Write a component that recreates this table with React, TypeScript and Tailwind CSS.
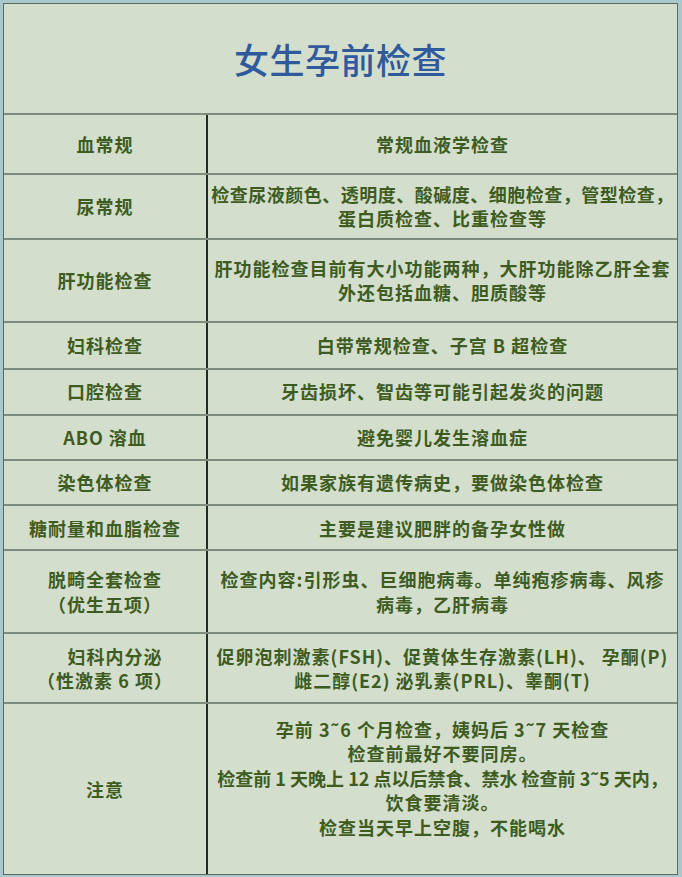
import React from "react";

type Row = {
  h: string;
  left: React.ReactNode;
  right: React.ReactNode;
};

const rows: Row[] = [
  { h: "h-[60px]", left: "血常规", right: "常规血液学检查" },
  {
    h: "h-[65px]",
    left: "尿常规",
    right: (
      <>
        <div className="tracking-[0.5px]">检查尿液颜色、透明度、酸碱度、细胞检查，管型检查，</div>
        <div>蛋白质检查、比重检查等</div>
      </>
    ),
  },
  {
    h: "h-[83px]",
    left: "肝功能检查",
    right: (
      <>
        <div>肝功能检查目前有大小功能两种，大肝功能除乙肝全套</div>
        <div>外还包括血糖、胆质酸等</div>
      </>
    ),
  },
  { h: "h-[47px]", left: "妇科检查", right: "白带常规检查、子宫 B 超检查" },
  { h: "h-[46px]", left: "口腔检查", right: "牙齿损坏、智齿等可能引起发炎的问题" },
  { h: "h-[45px]", left: "ABO 溶血", right: "避免婴儿发生溶血症" },
  { h: "h-[46px]", left: "染色体检查", right: "如果家族有遗传病史，要做染色体检查" },
  { h: "h-[45px]", left: "糖耐量和血脂检查", right: "主要是建议肥胖的备孕女性做" },
  {
    h: "h-[83px]",
    left: (
      <>
        <div>脱畸全套检查</div>
        <div>（优生五项）</div>
      </>
    ),
    right: (
      <>
        <div>检查内容:引形虫、巨细胞病毒。单纯疱疹病毒、风疹</div>
        <div>病毒，乙肝病毒</div>
      </>
    ),
  },
  {
    h: "h-[70px]",
    left: (
      <>
        <div className="pl-[20px]">妇科内分泌</div>
        <div>（性激素 6 项）</div>
      </>
    ),
    right: (
      <>
        <div>促卵泡刺激素(FSH)、促黄体生存激素(LH)、 孕酮(P)</div>
        <div>雌二醇(E2) 泌乳素(PRL)、睾酮(T)</div>
      </>
    ),
  },
  {
    h: "h-[172px]",
    left: "注意",
    right: (
      <div className="pb-[22px]">
        <div>孕前 3˜6 个月检查，姨妈后 3˜7 天检查</div>
        <div>检查前最好不要同房。</div>
        <div className="tracking-[0px]">检查前 1 天晚上 12 点以后禁食、禁水 检查前 3˜5 天内，</div>
        <div>饮食要清淡。</div>
        <div>检查当天早上空腹，不能喝水</div>
      </div>
    ),
  },
];

export default function App() {
  return (
    <div
      className="w-[682px] h-[877px] bg-[#a9c8cc] pt-[3px] pl-[3px]"
      style={{ fontFamily: '"Noto Sans CJK SC", "Noto Sans", sans-serif' }}
    >
      <div className="w-[675px] h-[872px] bg-[#d3dfcc] border border-[#5c6a64] flex flex-col">
        <div className="h-[109px] flex items-center justify-center pt-[2px]">
          <h1 className="text-[35px] font-medium text-[#2f5a9c] tracking-[0.5px]">
            女生孕前检查
          </h1>
        </div>
        {rows.map((r, i) => (
          <div
            key={i}
            className={`${r.h} flex border-t-2 border-[#7d8a7e] text-[#3e5c22] font-bold text-[18px] leading-[24.5px] tracking-[1px] whitespace-nowrap`}
          >
            <div className="w-[204px] shrink-0 flex flex-col items-center justify-center text-center border-r-2 border-[#1f2c1f]">
              {r.left}
            </div>
            <div className="flex-1 min-w-0 flex flex-col items-center justify-center text-center">
              {r.right}
            </div>
          </div>
        ))}
      </div>
    </div>
  );
}
